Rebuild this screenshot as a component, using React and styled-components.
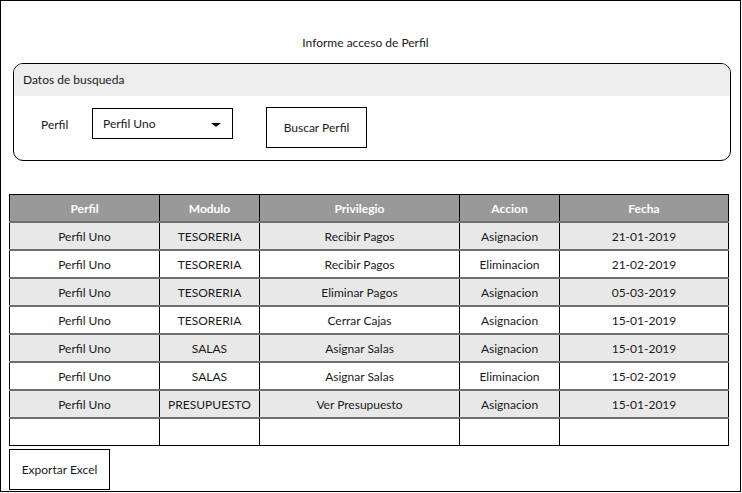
import styled, { createGlobalStyle } from 'styled-components'

const GlobalStyle = createGlobalStyle`
    body {
        margin: 0;
        background: #ffffff;
        font-family: Lato, "Open Sans", sans-serif;
        font-size: 12px;
        color: #1a1a1a;
    }
`

const Frame = styled.div`
    width: 741px;
    height: 492px;
    box-sizing: border-box;
    border: 1px solid #000;
    background: #fff;
    display: flex;
    flex-direction: column;
`

const Title = styled.div`
    text-align: center;
    padding: 34px 10px 0 0;
    line-height: 16px;
    height: 28px;
`

const Panel = styled.div`
    margin: 0 9px 0 12px;
    border: 1px solid #000;
    border-radius: 10px;
    overflow: hidden;
    height: 98px;
    box-sizing: border-box;
`

const PanelHeader = styled.div`
    height: 32px;
    background: #eeeeee;
    display: flex;
    align-items: center;
    padding-left: 9px;
    line-height: 16px;
`

const PanelBody = styled.div`
    display: flex;
    align-items: center;
    padding: 11px 0 0 27px;
`

const Label = styled.span`
    width: 51px;
    margin-top: -7px;
`

const Select = styled.div`
    width: 141px;
    height: 31px;
    box-sizing: border-box;
    border: 1px solid #000;
    display: flex;
    align-items: center;
    justify-content: space-between;
    padding: 0 11px 0 10px;
    margin-top: -9px;
`

const Caret = styled.span`
    width: 0;
    height: 0;
    border-left: 5px solid transparent;
    border-right: 5px solid transparent;
    border-top: 4px solid #000;
    margin-top: 3px;
`

const Button = styled.div`
    width: 101px;
    height: 41px;
    box-sizing: border-box;
    border: 1px solid #000;
    background: #fff;
    display: flex;
    align-items: center;
    justify-content: center;
    margin-left: ${p => p.$gap || 0}px;
    flex-shrink: 0;
`

const Table = styled.table`
    margin: 33px 0 0 8px;
    border-collapse: collapse;
    table-layout: fixed;
    width: 719px;
    border: 1px solid #000;
`

const HeadCell = styled.th`
    background: #999999;
    color: #fff;
    font-weight: bold;
    height: 26px;
    padding: 0;
    border-left: 1px solid #000;
    border-bottom: 2px solid #6f6f6f;
`

const Row = styled.tr`
    background: ${p => (p.$shaded ? '#e8e8e8' : '#ffffff')};
`

const Cell = styled.td`
    height: 26px;
    padding: 0;
    text-align: center;
    border-left: 1px solid #000;
    border-bottom: ${p => (p.$last ? '1px solid #000' : '2px solid #6f6f6f')};
`

const Footer = styled.div`
    padding: 3px 0 0 8px;
`

const columns = [
    { title: 'Perfil', width: 150 },
    { title: 'Modulo', width: 100 },
    { title: 'Privilegio', width: 200 },
    { title: 'Accion', width: 100 },
    { title: 'Fecha', width: 169 },
]

const rows = [
    ['Perfil Uno', 'TESORERIA', 'Recibir Pagos', 'Asignacion', '21-01-2019'],
    ['Perfil Uno', 'TESORERIA', 'Recibir Pagos', 'Eliminacion', '21-02-2019'],
    ['Perfil Uno', 'TESORERIA', 'Eliminar Pagos', 'Asignacion', '05-03-2019'],
    ['Perfil Uno', 'TESORERIA', 'Cerrar Cajas', 'Asignacion', '15-01-2019'],
    ['Perfil Uno', 'SALAS', 'Asignar Salas', 'Asignacion', '15-01-2019'],
    ['Perfil Uno', 'SALAS', 'Asignar Salas', 'Eliminacion', '15-02-2019'],
    ['Perfil Uno', 'PRESUPUESTO', 'Ver Presupuesto', 'Asignacion', '15-01-2019'],
    ['', '', '', '', ''],
]

const App = () => {
    return (
        <>
            <GlobalStyle />
            <Frame>
                <Title>Informe acceso de Perfil</Title>
                <Panel>
                    <PanelHeader>Datos de busqueda</PanelHeader>
                    <PanelBody>
                        <Label>Perfil</Label>
                        <Select>
                            Perfil Uno
                            <Caret />
                        </Select>
                        <Button $gap={33}>Buscar Perfil</Button>
                    </PanelBody>
                </Panel>
                <Table>
                    <colgroup>
                        {columns.map(c => (
                            <col key={c.title} style={{ width: c.width }} />
                        ))}
                    </colgroup>
                    <thead>
                        <tr>
                            {columns.map(c => (
                                <HeadCell key={c.title}>{c.title}</HeadCell>
                            ))}
                        </tr>
                    </thead>
                    <tbody>
                        {rows.map((r, i) => (
                            <Row key={i} $shaded={i % 2 === 0 && i < rows.length - 1}>
                                {r.map((v, j) => (
                                    <Cell key={j} $last={i === rows.length - 1}>{v}</Cell>
                                ))}
                            </Row>
                        ))}
                    </tbody>
                </Table>
                <Footer>
                    <Button>Exportar Excel</Button>
                </Footer>
            </Frame>
        </>
    )
}

export default App
